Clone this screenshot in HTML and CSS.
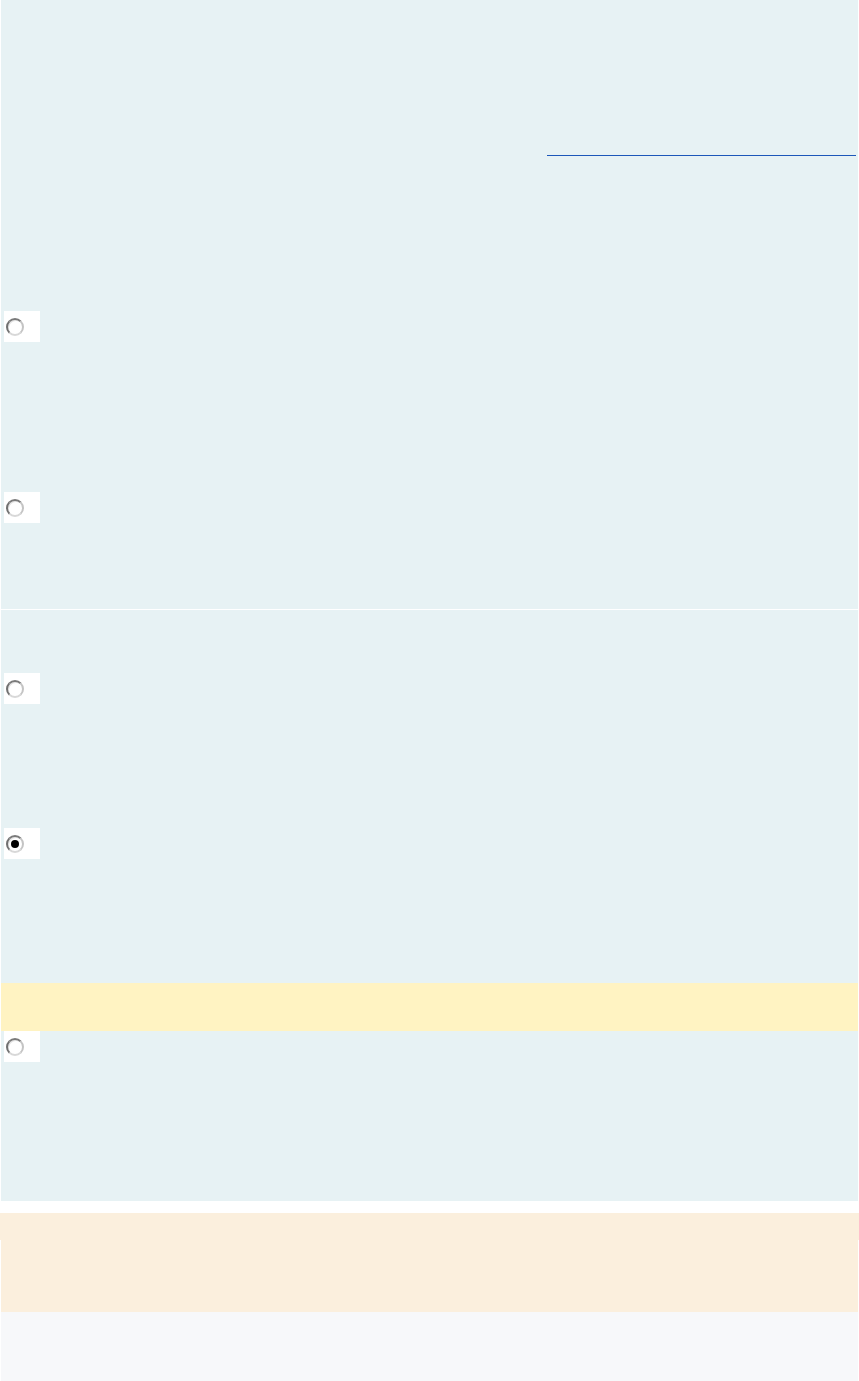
FILE: index.html
```html
<!DOCTYPE html>
<html>
<head>
    <title>Quiz</title>
    <meta charset="UTF-8">
    <link rel="stylesheet" href="styles.css">
</head>
<body>
    <div class="question q1">
        <div class="stem"></div>
        <div class="blank"></div>
        <div class="choice first"><input type="radio" name="q1"></div>
        <div class="choice"><input type="radio" name="q1"></div>
    </div>
    <div class="question q2">
        <div class="choice first"><input type="radio" name="q2"></div>
        <div class="choice"><input type="radio" name="q2" checked></div>
        <div class="hint"></div>
        <div class="choice after-hint"><input type="radio" name="q2"></div>
    </div>
    <div class="feedback">
        <div class="feedback-head"></div>
        <div class="feedback-body"></div>
    </div>
    <div class="footer"></div>
</body>
</html>
```

FILE: styles.css
```css
html {
    background-color: #ffffff;
}
body {
    margin: 0;
    font-family: "Liberation Sans", Arial, sans-serif;
    font-size: 14px;
}
.question {
    background-color: #e7f2f4;
    margin: 0 1px;
}
.q1 {
    height: 609px;
    overflow: hidden;
}
.q2 {
    margin-top: 1px;
    height: 591px;
    padding-top: 63px;
    box-sizing: border-box;
    overflow: hidden;
}
.stem {
    height: 155px;
}
.blank {
    width: 309px;
    margin-left: auto;
    margin-right: 2px;
    border-top: 1px solid #1d57b9;
}
.choice {
    width: 36px;
    height: 31px;
    margin-left: 3px;
    margin-top: 150px;
    background-color: #ffffff;
    display: flex;
    align-items: center;
}
.q1 .choice.first {
    margin-top: 155px;
}
.q2 .choice {
    margin-top: 124px;
}
.q2 .choice.first {
    margin-top: 0;
}
.q2 .choice.after-hint {
    margin-top: 0;
}
.hint {
    height: 48px;
    margin-top: 124px;
    background-color: #fff3c2;
}
input[type="radio"] {
    -webkit-appearance: none;
    appearance: none;
    width: 18px;
    height: 18px;
    margin: 0 0 0 2px;
    border-radius: 50%;
    border: 2px solid;
    border-color: #7a7a7a #c4c4c4 #d8d8d8 #707070;
    background-color: #ffffff;
    box-shadow: inset 1px 1px 0 #e4e4e4;
    box-sizing: border-box;
    position: relative;
}
input[type="radio"]:checked::after {
    content: "";
    position: absolute;
    left: 3px;
    top: 3px;
    width: 8px;
    height: 8px;
    border-radius: 50%;
    background-color: #000000;
}
.feedback {
    margin: 12px 1px 0;
    background-color: #fbefdd;
}
.feedback-head {
    height: 27px;
    margin: 0 -1px;
    background-color: #fbefdd;
}
.feedback-body {
    height: 72px;
}
.footer {
    margin: 0 1px;
    height: 69px;
    background-color: #f7f8fa;
}
```
